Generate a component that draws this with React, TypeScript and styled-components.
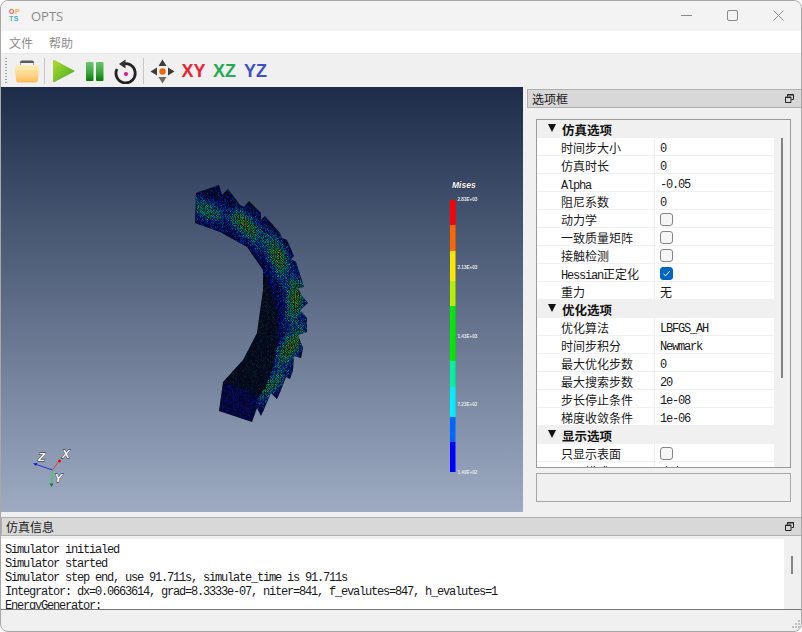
import React, { useMemo } from "react";
import styled, { createGlobalStyle } from "styled-components";

const GlobalStyle = createGlobalStyle`
  html, body {
    margin: 0;
    background: #ffffff;
    overflow: hidden;
  }
  * {
    box-sizing: border-box;
  }
`;

const CJK = `"Noto Sans CJK SC", "Noto Sans", sans-serif`;

const Window = styled.div`
  width: 802px;
  height: 632px;
  display: flex;
  flex-direction: column;
  background: #f0f0f0;
  border: 1px solid #a8a8a8;
  border-radius: 8px;
  overflow: hidden;
  font-family: ${CJK};
  font-size: 12px;
  color: #1a1a1a;
`;

const TitleBar = styled.div`
  height: 30px;
  flex: none;
  display: flex;
  align-items: center;
  background: #f3f3f3;
  padding-left: 8px;
`;

const Logo = styled.div`
  width: 18px;
  display: flex;
  flex-direction: column;
  font: bold 7px/7px "Liberation Sans", sans-serif;
  letter-spacing: 0.5px;
  margin-right: 4px;
  margin-top: -2px;
`;

const LogoLine = styled.span<{ $color: string }>`
  color: ${(p) => p.$color};
`;

const TitleText = styled.span`
  font: 13px "Open Sans", sans-serif;
  color: #8a8a8a;
  flex: 1;
`;

const WindowButton = styled.div`
  width: 46px;
  height: 28px;
  align-self: flex-start;
  display: flex;
  align-items: center;
  justify-content: center;
`;

const MenuBar = styled.div`
  height: 22px;
  flex: none;
  display: flex;
  align-items: center;
  gap: 16px;
  padding-left: 8px;
  background: #ffffff;
  color: #8c8c8c;
`;

const Toolbar = styled.div`
  height: 34px;
  flex: none;
  display: flex;
  align-items: center;
  padding: 1px 0 0 4px;
  background: #f0f0f0;
  border-top: 1px solid #e8e8e8;
`;

const Grip = styled.div`
  width: 2px;
  height: 28px;
  margin-right: 4px;
  background-image: radial-gradient(circle, #a0a0a0 0.8px, transparent 0.9px);
  background-size: 2px 3px;
`;

const ToolButton = styled.div`
  width: 31px;
  height: 31px;
  display: flex;
  align-items: center;
  justify-content: center;
`;

const AxisButton = styled(ToolButton)<{ $color: string }>`
  font: bold 18px "Liberation Sans", sans-serif;
  letter-spacing: -0.1px;
  color: ${(p) => p.$color};
`;

const ToolSeparator = styled.div`
  width: 1px;
  height: 26px;
  margin: 0 3px 0 2px;
  background: #c6c6c6;
`;

const Main = styled.div`
  height: 425px;
  flex: none;
  display: flex;
`;

const Viewport = styled.div`
  width: 522px;
  flex: none;
  background: linear-gradient(#1c2c49, #9eabc3);
`;

const Scene = styled.svg`
  display: block;
  width: 522px;
  height: 425px;
`;

const OptionsDock = styled.div`
  flex: 1;
  display: flex;
  flex-direction: column;
  margin-left: 4px;
  padding-top: 2px;
`;

const DockTitle = styled.div<{ $inset: number }>`
  height: 19px;
  flex: none;
  display: flex;
  align-items: center;
  justify-content: space-between;
  padding: 0 7px 0 ${(p) => p.$inset}px;
  background: #d8d8d8;
  border: 1px solid #b0b0b0;
  border-right: none;
  line-height: 17px;
  font-size: 12px;
`;

const OptionsBody = styled.div`
  flex: 1;
  display: flex;
  flex-direction: column;
  gap: 5px;
  padding: 11px 10px 10px 9px;
`;

const TreePanel = styled.div`
  height: 349px;
  flex: none;
  display: flex;
  border: 1px solid #9a9a9a;
  overflow: hidden;
  background: #f0f0f0;
`;

const TreeList = styled.div`
  width: 237px;
  flex: none;
`;

const ScrollTrack = styled.div`
  flex: 1;
  position: relative;
`;

const ScrollThumb = styled.div<{ $top: number; $height: number; $left: number }>`
  position: absolute;
  top: ${(p) => p.$top}px;
  left: ${(p) => p.$left}px;
  width: 2px;
  height: ${(p) => p.$height}px;
  background: #858585;
`;

const SectionRow = styled.div`
  height: 18px;
  display: flex;
  align-items: center;
  padding-left: 11px;
  font-weight: 700;
  font-size: 12.5px;
  color: #111111;
`;

const Arrow = styled.span`
  width: 0;
  height: 0;
  margin: -2px 6px 0 0;
  border-left: 4.5px solid transparent;
  border-right: 4.5px solid transparent;
  border-top: 8px solid #111111;
`;

const OptionRow = styled.div`
  height: 18px;
  display: flex;
  background: #ffffff;
  border-bottom: 1px solid #f0f0f0;
`;

const OptionLabel = styled.div`
  width: 118px;
  flex: none;
  padding: 1px 0 0 24px;
  line-height: 17px;
  border-right: 1px solid #f0f0f0;
  white-space: nowrap;
`;

const Latin = styled.span`
  font-family: "Liberation Mono", monospace;
  font-size: 12px;
  letter-spacing: -1.2px;
`;

const OptionValue = styled.div`
  flex: 1;
  display: flex;
  align-items: center;
  padding: 2px 0 0 5px;
  line-height: 17px;

  ${Latin} {
    margin-top: 4px;
  }
`;

const CheckBox = styled.span<{ $checked?: boolean }>`
  width: 13px;
  height: 13px;
  display: flex;
  align-items: center;
  justify-content: center;
  border-radius: 3px;
  border: 1px solid ${(p) => (p.$checked ? "#0067c0" : "#858585")};
  background: ${(p) => (p.$checked ? "#0067c0" : "#f6f6f6")};
`;

const InfoBox = styled.div`
  height: 29px;
  flex: none;
  border: 1px solid #a8a8a8;
  background: #f0f0f0;
`;

const LogDock = styled.div`
  margin-top: 5px;
  flex: none;
  display: flex;
  flex-direction: column;
`;

const LogBody = styled.div`
  height: 71px;
  margin-top: 3px;
  display: flex;
  border-bottom: 1px solid #777777;
`;

const LogText = styled.div`
  width: 783px;
  flex: none;
  padding: 4px 0 0 4px;
  background: #ffffff;
  overflow: hidden;
`;

const LogLine = styled(Latin)`
  display: block;
  height: 14px;
  line-height: 14px;
  white-space: nowrap;
`;

const StatusBar = styled.div`
  flex: 1;
  position: relative;
`;

const SizeGrip = styled.svg`
  position: absolute;
  right: 1px;
  bottom: 1px;
`;

type Option = { label: React.ReactNode; value?: React.ReactNode; check?: boolean; on?: boolean };
type Section = { title: string; rows: Option[] };

const SECTIONS: Section[] = [
  {
    title: "仿真选项",
    rows: [
      { label: "时间步大小", value: <Latin>0</Latin> },
      { label: "仿真时长", value: <Latin>0</Latin> },
      { label: <Latin>Alpha</Latin>, value: <Latin>-0.05</Latin> },
      { label: "阻尼系数", value: <Latin>0</Latin> },
      { label: "动力学", check: true },
      { label: "一致质量矩阵", check: true },
      { label: "接触检测", check: true },
      { label: <><Latin>Hessian</Latin>正定化</>, check: true, on: true },
      { label: "重力", value: "无" },
    ],
  },
  {
    title: "优化选项",
    rows: [
      { label: "优化算法", value: <Latin>LBFGS_AH</Latin> },
      { label: "时间步积分", value: <Latin>Newmark</Latin> },
      { label: "最大优化步数", value: <Latin>0</Latin> },
      { label: "最大搜索步数", value: <Latin>20</Latin> },
      { label: "步长停止条件", value: <Latin>1e-08</Latin> },
      { label: "梯度收敛条件", value: <Latin>1e-06</Latin> },
    ],
  },
  {
    title: "显示选项",
    rows: [
      { label: "只显示表面", check: true },
      { label: "显示模式", value: "应力云图" },
    ],
  },
];

const LOG_LINES = [
  "Simulator initialed",
  "Simulator started",
  "Simulator step end, use 91.711s, simulate_time is 91.711s",
  "Integrator: dx=0.0663614, grad=8.3333e-07, niter=841, f_evalutes=847, h_evalutes=1",
  "EnergyGenerator:",
];

// gear outline, page coordinates
const GEAR: [number, number][] = [
  [196, 193], [219, 185], [222, 195], [228, 189], [240, 205], [244, 207], [249, 201], [261, 213],
  [261, 220], [265, 216], [280, 233], [282, 238], [287, 240], [294, 256], [291, 259], [296, 262],
  [304, 287], [298, 288], [302, 296], [308, 303], [300, 310], [307, 318], [307, 332], [298, 335],
  [303, 348], [301, 358], [294, 356], [293, 370], [290, 379], [286, 377], [281, 390], [277, 399],
  [271, 393], [265, 407], [261, 416], [257, 408], [252, 422], [219, 411], [223, 382], [243, 360],
  [257, 333], [263, 290], [263, 270], [247, 247], [220, 232], [195, 223],
];
const END_FACE: [number, number][] = [[223, 382], [257, 393], [252, 422], [219, 411]];
const LEGEND: [number, number, string][] = [
  [200, 225, "#ff0000"], [225, 251, "#ff6600"], [251, 281, "#ffe600"], [281, 306, "#b4f000"],
  [306, 361, "#00e600"], [361, 387, "#00f0a0"], [387, 417, "#00ecff"], [417, 442, "#0066ff"],
  [442, 472, "#0000ff"],
];
const LEGEND_LABELS: [number, string][] = [
  [199, "2.83E+03"], [267, "2.13E+03"], [336, "1.43E+03"], [404, "7.23E+02"], [472, "1.40E+02"],
];
const STRESS = ["#0a0a96", "#0030c0", "#0070c0", "#00a8a0", "#08a060", "#2ca030", "#78a818"];

const inside = (poly: [number, number][], x: number, y: number) => {
  let hit = false;
  for (let i = 0, j = poly.length - 1; i < poly.length; j = i++) {
    const [xi, yi] = poly[i];
    const [xj, yj] = poly[j];
    if (yi > y !== yj > y && x < ((xj - xi) * (y - yi)) / (yj - yi) + xi) hit = !hit;
  }
  return hit;
};

const buildMesh = () => {
  let seed = 12345;
  const rnd = () => {
    seed = (seed * 1664525 + 1013904223) % 4294967296;
    return seed / 4294967296;
  };
  const paths: Record<string, string> = {};
  const step = 2.5;
  for (let gx = 190; gx < 312; gx += step) {
    for (let gy = 182; gy < 426; gy += step) {
      for (let t = 0; t < 2; t++) {
        const x = gx + (t ? 1.4 : 0) + rnd() * 0.7;
        const y = gy + (t ? 1.2 : 0) + rnd() * 0.7;
        if (!inside(GEAR, x + 0.7, y + 0.6)) continue;
        const r = Math.hypot(x - 177, y - 308);
        const th = Math.atan2(y - 308, x - 177);
        let color = "#060a3c";
        if (inside(END_FACE, x, y)) {
          color = rnd() > 0.45 ? "#0c0c8c" : "#060650";
        } else if (r < (y < 262 ? 0 : 92 + Math.pow((y - 262) / 140, 1.5) * 30)) {
          const n = rnd();
          color = n > 0.8 ? "#0a2c2c" : n > 0.4 ? "#07142c" : "#050c1c";
        } else {
          const centre = 102 + 17 * Math.min(1, Math.max(0, (th + 1.3) / 1.3));
          const ripple = 0.72 + 0.28 * Math.cos(th * 15.5 + 1.2 + (r - centre) * 0.14);
          const fade = th > 0.35 ? Math.max(0.6, 1 - (th - 0.35) * 0.6) : th < -1.05 ? 0.72 : 1;
          const s = Math.exp(-(((r - centre) / 11) ** 2)) * ripple * fade * 0.88 + (rnd() - 0.5) * 0.34;
          if (s < 0.05) color = r > centre + 12 ? (rnd() > 0.55 ? "#0a1c1c" : "#050a2e") : rnd() > 0.5 ? "#08087c" : "#050a44";
          else color = STRESS[Math.min(STRESS.length - 1, Math.floor(s * STRESS.length))];
        }
        const d = `M${x.toFixed(1)} ${y.toFixed(1)}h1.7l-.8 1.6z`;
        paths[color] = (paths[color] ?? "") + d;
      }
    }
  }
  return Object.entries(paths);
};

const GearMesh = () => {
  const mesh = useMemo(buildMesh, []);
  const outline = GEAR.map((p) => p.join(",")).join(" ");
  return (
    <g>
      <clipPath id="gear-clip">
        <polygon points={outline} />
      </clipPath>
      <polygon points={outline} fill="#040818" />
      <g clipPath="url(#gear-clip)">
        {mesh.map(([color, d]) => (
          <path key={color} d={d} fill={color} />
        ))}
      </g>
    </g>
  );
};

const Legend = () => (
  <g fontFamily='"Liberation Sans", sans-serif'>
    <text x="452" y="188" fontSize="8.5" fontWeight="700" fontStyle="italic" fill="#ffffff" stroke="#111" strokeWidth="0.5" paintOrder="stroke">Mises</text>
    {LEGEND.map(([y1, y2, c]) => (
      <rect key={c} x="450" y={y1} width="5.5" height={y2 - y1} fill={c} />
    ))}
    {LEGEND_LABELS.map(([y, t]) => (
      <text key={t} x="457.5" y={y + 1.8} fontSize="4.6" fontWeight="700" fill="#e8e8e8">{t}</text>
    ))}
  </g>
);

const Triad = () => (
  <g fontFamily='"Liberation Sans", sans-serif' fontSize="11.5" fontWeight="700" fontStyle="italic" fill="#ffffff" stroke="#222" strokeWidth="0.8" paintOrder="stroke">
    <line x1="52.5" y1="470" x2="59" y2="461" stroke="#e04040" strokeWidth="1" />
    <circle cx="59.5" cy="461" r="1.5" fill="#e01010" stroke="none" />
    <line x1="52.5" y1="470" x2="35" y2="464" stroke="#2030e0" strokeWidth="1" />
    <polygon points="33,463.2 37.5,463 36,466" fill="#1020d0" stroke="none" />
    <line x1="52.5" y1="470" x2="51.5" y2="484" stroke="#30d050" strokeWidth="1" />
    <polygon points="49.5,483.5 53.5,483.5 51.5,487" fill="#108030" stroke="none" />
    <text x="38" y="460.5">Z</text>
    <text x="62" y="458">X</text>
    <text x="54.5" y="482">Y</text>
  </g>
);

const FolderIcon = () => (
  <svg width="26" height="25" viewBox="0 0 26 25">
    <defs>
      <linearGradient id="folder-body" x1="0" y1="0" x2="0" y2="1">
        <stop offset="0" stopColor="#ffe9a8" />
        <stop offset="0.6" stopColor="#fdd488" />
        <stop offset="1" stopColor="#f6b958" />
      </linearGradient>
    </defs>
    <path d="M6 6V3.5Q6 1.5 8 1.5H18Q20 1.5 20 3.5V6Z" fill="#5a5a5a" />
    <rect x="6.5" y="4" width="13" height="3.5" fill="#f4f4f4" />
    <path d="M1 8.5Q1 6.5 3 6.5H23Q25 6.5 25 8.5L24 21Q23.8 23.5 21 23.5H5Q2.2 23.5 2 21Z" fill="url(#folder-body)" />
    <path d="M1.5 10H24.5" stroke="#fff4d0" strokeWidth="1" />
  </svg>
);

const PlayIcon = () => (
  <svg width="23" height="24" viewBox="0 0 23 24">
    <defs>
      <linearGradient id="play-fill" x1="0" y1="0" x2="1" y2="1">
        <stop offset="0" stopColor="#b6dc2c" />
        <stop offset="1" stopColor="#3faa2c" />
      </linearGradient>
    </defs>
    <path d="M1 2Q1 .5 2.5 1L22 11.5Q23 12 22 12.7L2.5 23Q1 23.6 1 22Z" fill="url(#play-fill)" />
  </svg>
);

const PauseIcon = () => (
  <svg width="20" height="21" viewBox="0 0 20 21">
    <defs>
      <linearGradient id="pause-fill" x1="0" y1="0" x2="0" y2="1">
        <stop offset="0" stopColor="#6cc46c" />
        <stop offset="0.55" stopColor="#3ea63e" />
        <stop offset="1" stopColor="#067a06" />
      </linearGradient>
    </defs>
    <rect x="1" y="1" width="7.5" height="19" rx="1" fill="url(#pause-fill)" />
    <rect x="11" y="1" width="7.5" height="19" rx="1" fill="url(#pause-fill)" />
  </svg>
);

const ResetIcon = () => (
  <svg width="24" height="25" viewBox="0 0 24 25">
    <path d="M7.5 5.6A9.6 9.6 0 1 1 3 10" fill="none" stroke="#222222" strokeWidth="2.8" />
    <path d="M11.5 .5V9.5L5 5Z" fill="#333333" />
    <circle cx="12" cy="15" r="2" fill="#e0108a" />
  </svg>
);

const MoveIcon = () => (
  <svg width="25" height="25" viewBox="0 0 25 25">
    <polygon points="12.5,0.5 8.5,7 16.5,7" fill="#3c3c3c" />
    <polygon points="12.5,24.5 8.5,18 16.5,18" fill="#706a5c" />
    <polygon points="0.5,12.5 7,8.5 7,16.5" fill="#3c3c3c" />
    <polygon points="24.5,12.5 18,8.5 18,16.5" fill="#3c3c3c" />
    <circle cx="12.5" cy="12.5" r="3.2" fill="#f0640a" />
  </svg>
);

const FloatIcon = () => (
  <svg width="9" height="9" viewBox="0 0 9 9">
    <path d="M2.5 2.5V.5H8.5V5.5H6.5M.5 3H6V8.5H.5Z" fill="none" stroke="#222222" strokeWidth="1" />
    <path d="M2.5 1H8.5M.5 3.5H6" stroke="#222222" strokeWidth="1" />
  </svg>
);

const CheckMark = () => (
  <svg width="9" height="9" viewBox="0 0 9 9">
    <path d="M1.5 4.8L3.6 6.8L7.6 2.2" fill="none" stroke="#ffffff" strokeWidth="1" />
  </svg>
);

const App = () => {
  return (
    <>
      <GlobalStyle />
      <Window>
        <TitleBar>
          <Logo>
            <span>
              <LogoLine $color="#ee5a55">O</LogoLine>
              <LogoLine $color="#eebb44">P</LogoLine>
            </span>
            <span>
              <LogoLine $color="#44bb99">T</LogoLine>
              <LogoLine $color="#44aadd">S</LogoLine>
            </span>
          </Logo>
          <TitleText>OPTS</TitleText>
          <WindowButton>
            <svg width="11" height="11" viewBox="0 0 11 11">
              <path d="M0 5.5H11" stroke="#8a8a8a" strokeWidth="1" />
            </svg>
          </WindowButton>
          <WindowButton>
            <svg width="11" height="11" viewBox="0 0 11 11">
              <rect x=".5" y=".5" width="10" height="10" rx="1.5" fill="none" stroke="#8a8a8a" strokeWidth="1" />
            </svg>
          </WindowButton>
          <WindowButton>
            <svg width="11" height="11" viewBox="0 0 11 11">
              <path d="M.5 .5L10.5 10.5M10.5 .5L.5 10.5" stroke="#8a8a8a" strokeWidth="1" />
            </svg>
          </WindowButton>
        </TitleBar>
        <MenuBar>
          <span>文件</span>
          <span>帮助</span>
        </MenuBar>
        <Toolbar>
          <Grip />
          <ToolButton><FolderIcon /></ToolButton>
          <ToolSeparator />
          <ToolButton><PlayIcon /></ToolButton>
          <ToolButton><PauseIcon /></ToolButton>
          <ToolButton><ResetIcon /></ToolButton>
          <ToolSeparator />
          <ToolButton><MoveIcon /></ToolButton>
          <AxisButton $color="#ee2233">XY</AxisButton>
          <AxisButton $color="#22aa55">XZ</AxisButton>
          <AxisButton $color="#3f4fc8">YZ</AxisButton>
        </Toolbar>
        <Main>
          <Viewport>
            <Scene viewBox="1 87 522 425">
              <GearMesh />
              <Legend />
              <Triad />
            </Scene>
          </Viewport>
          <OptionsDock>
            <DockTitle $inset={4}>
              选项框
              <FloatIcon />
            </DockTitle>
            <OptionsBody>
              <TreePanel>
                <TreeList>
                  {SECTIONS.map((section) => (
                    <React.Fragment key={section.title}>
                      <SectionRow>
                        <Arrow />
                        {section.title}
                      </SectionRow>
                      {section.rows.map((row, i) => (
                        <OptionRow key={i}>
                          <OptionLabel>{row.label}</OptionLabel>
                          <OptionValue>
                            {row.check ? (
                              <CheckBox $checked={row.on}>{row.on && <CheckMark />}</CheckBox>
                            ) : (
                              row.value
                            )}
                          </OptionValue>
                        </OptionRow>
                      ))}
                    </React.Fragment>
                  ))}
                </TreeList>
                <ScrollTrack>
                  <ScrollThumb $top={18} $height={240} $left={7} />
                </ScrollTrack>
              </TreePanel>
              <InfoBox />
            </OptionsBody>
          </OptionsDock>
        </Main>
        <LogDock>
          <DockTitle $inset={4}>
            仿真信息
            <FloatIcon />
          </DockTitle>
          <LogBody>
            <LogText>
              {LOG_LINES.map((line) => (
                <LogLine key={line}>{line}</LogLine>
              ))}
            </LogText>
            <ScrollTrack>
              <ScrollThumb $top={17} $height={18} $left={7} />
            </ScrollTrack>
          </LogBody>
        </LogDock>
        <StatusBar>
          <SizeGrip width="10" height="10" viewBox="0 0 10 10">
            <path d="M8 0h2v2H8zM5 3h2v2H5zM8 3h2v2H8zM2 6h2v2H2zM5 6h2v2H5zM8 6h2v2H8z" fill="#c0c0c0" />
          </SizeGrip>
        </StatusBar>
      </Window>
    </>
  );
};

export default App;
